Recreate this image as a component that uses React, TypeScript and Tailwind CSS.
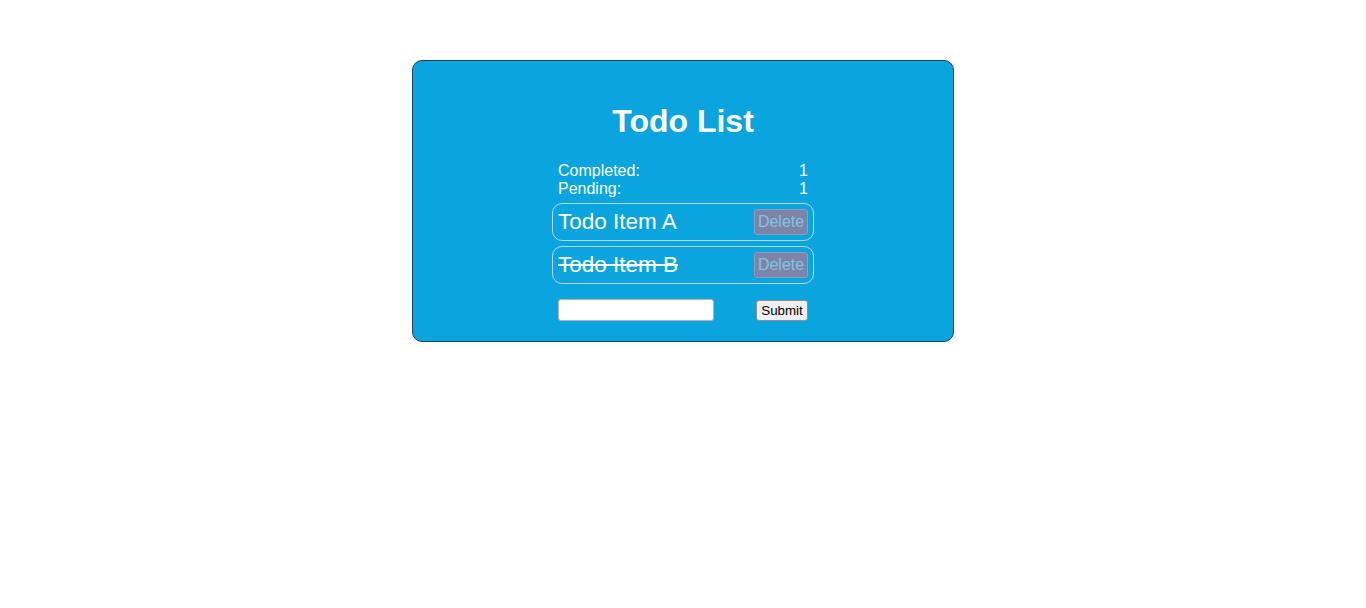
const FONT = "font-['Liberation_Sans',Arial,sans-serif]";

const TODOS = [
  { id: "a", text: "Todo Item A", done: false },
  { id: "b", text: "Todo Item B", done: true },
];

function TodoRow({ text, done }: { text: string; done: boolean }) {
  return (
    <div className="flex h-[38px] items-center justify-between rounded-[10px] border border-[#b8d6e6] px-[5px]">
      <span className={`text-[22.5px] leading-[26px] text-white ${done ? "line-through" : ""}`}>{text}</span>
      <button className="h-[26px] w-[54px] rounded-[3px] border border-[#8d9dbd] bg-[#7d84a8] text-[16px] leading-[18px] text-[#80c4e4]">
        Delete
      </button>
    </div>
  );
}

export default function App() {
  const completed = TODOS.filter((t) => t.done).length;
  const pending = TODOS.length - completed;

  return (
    <div className={`min-h-[608px] bg-white pt-[60px] ${FONT}`}>
      <div className="mx-auto w-[542px] rounded-[10px] border border-[#1d4560] bg-[#0aa4df] pb-[20px] pt-[42px]">
        <h1 className="text-center text-[32px] font-bold leading-[37px] text-white">Todo List</h1>
        <div className="mx-auto mt-[22px] w-[262px]">
          <div className="px-[6px] text-[16px] leading-[18px] text-white">
            <div className="flex justify-between">
              <span>Completed:</span>
              <span>{completed}</span>
            </div>
            <div className="flex justify-between">
              <span>Pending:</span>
              <span>{pending}</span>
            </div>
          </div>
          <div className="mt-[5px] flex flex-col gap-[5px]">
            {TODOS.map((t) => (
              <TodoRow key={t.id} text={t.text} done={t.done} />
            ))}
          </div>
          <form className="mt-[15px] flex h-[22px] items-center justify-between px-[6px]" onSubmit={(e) => e.preventDefault()}>
            <input className="h-[22px] w-[156px] rounded-[3px] border border-[#b5b5b5] bg-white" />
            <button
              type="submit"
              className="h-[21px] w-[52px] rounded-[3px] border border-[#8f8f8f] bg-[#efefef] text-[13.33px] leading-[15px] text-black"
            >
              Submit
            </button>
          </form>
        </div>
      </div>
    </div>
  );
}
